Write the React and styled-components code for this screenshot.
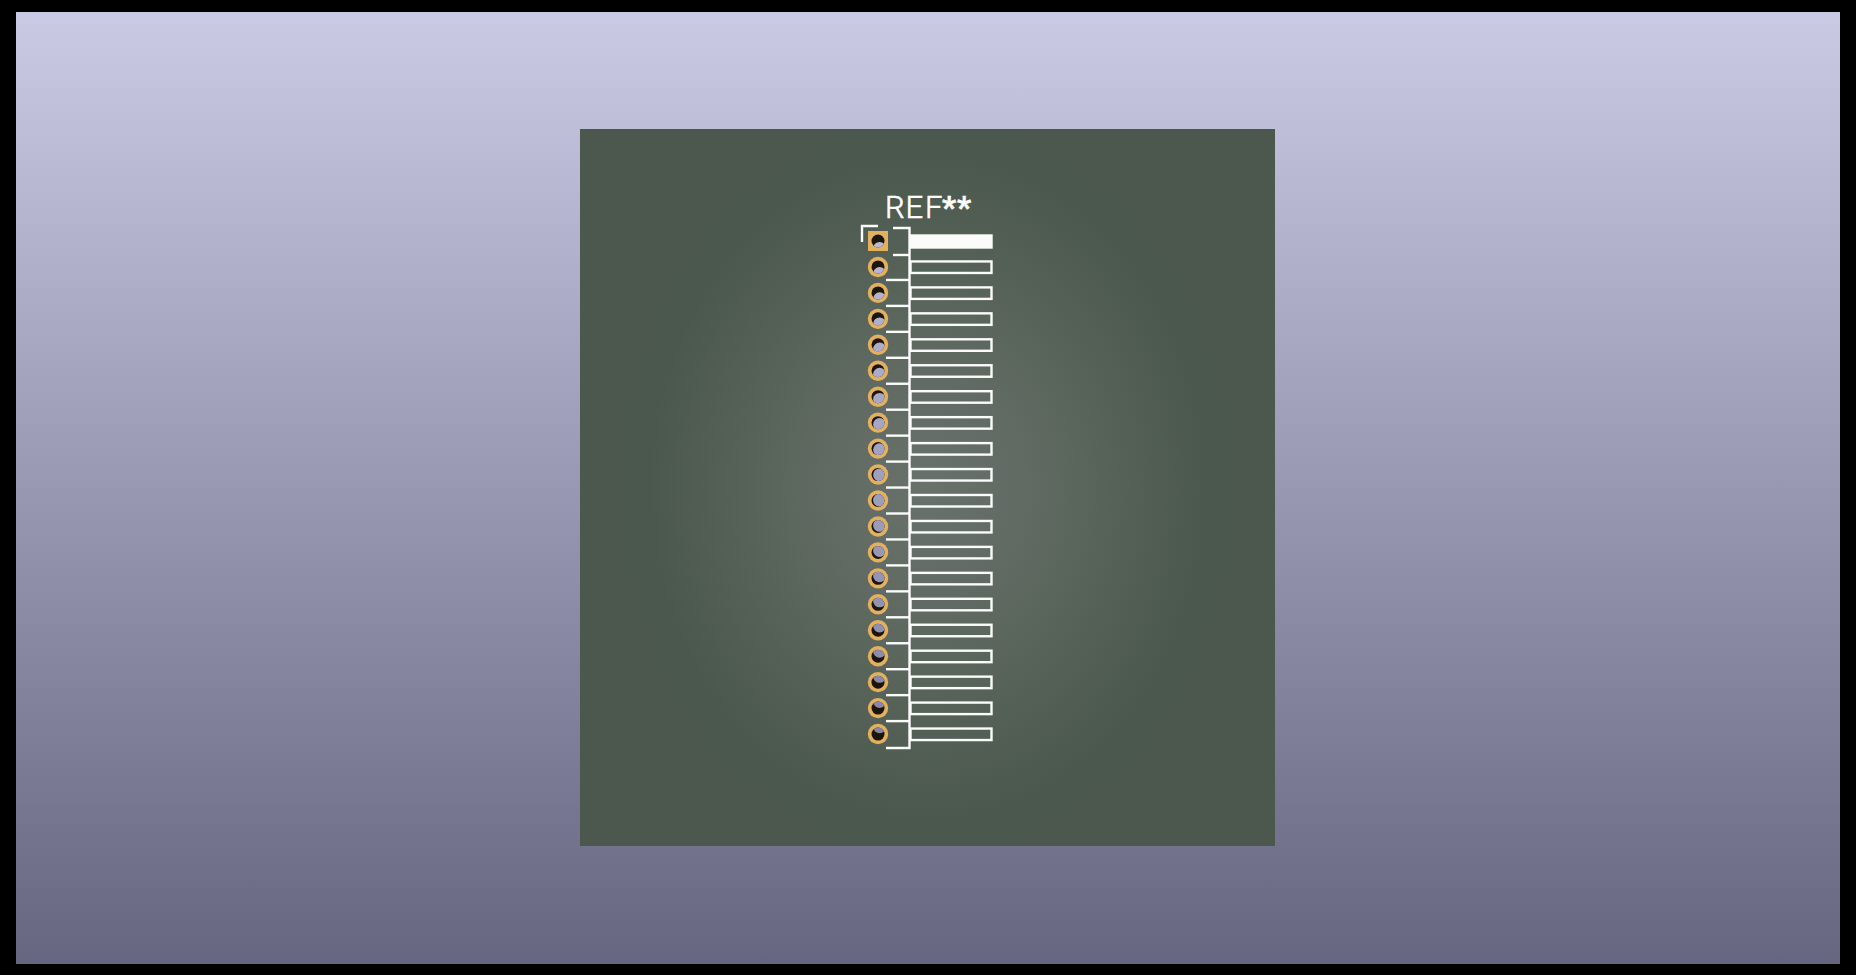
import styled, { createGlobalStyle } from "styled-components";

const GlobalStyle = createGlobalStyle`
  html, body {
    margin: 0;
    height: 100%;
    background: #000;
    overflow: hidden;
  }
`;

const Window = styled.div`
  box-sizing: border-box;
  width: 100vw;
  height: 100vh;
  padding: 12px 16px 11px;
  background: #000;
`;

const Canvas = styled.div`
  box-sizing: border-box;
  width: 100%;
  height: 100%;
  padding: 0 1px 1px 0;
  display: flex;
  align-items: center;
  justify-content: center;
  background: linear-gradient(180deg, #cacae4 0%, #666680 100%);
`;

const Board = styled.div`
  width: 695px;
  height: 717px;
  background: radial-gradient(
    ellipse 310px 370px at 50% 50%,
    #68726a 0%,
    #616b63 30%,
    #566258 60%,
    #4b584e 90%,
    #4c584e 100%
  );
`;

const Drawing = styled.svg`
  display: block;
`;

const RefText = styled.text`
  font-family: Roboto, "Liberation Sans", sans-serif;
  font-size: 31px;
  font-weight: 300;
  fill: #fff;
  stroke: #fff;
  stroke-width: 0.6px;
`;

const Stars = styled.tspan`
  font-size: 32px;
  font-weight: 500;
`;

const PIN_COUNT = 20;
const PITCH = 25.95;
const FIRST_Y = 241;
const PAD_X = 878;
const CENTER_X = 928;
const CENTER_Y = 488;
const HOLE_R = 6.5;
const SILK = "#fbfbfb";

// colour of the background seen through a drilled hole
const skyAt = (y) => {
  const t = (y - 241) / 493;
  const c = (a, b) => Math.round(a + (b - a) * t);
  return `rgb(${c(184, 132)},${c(184, 132)},${c(214, 164)})`;
};

const pins = Array.from({ length: PIN_COUNT }, (_, i) => FIRST_Y + i * PITCH);

const Pad = ({ y, index }) => {
  const dx = (CENTER_X - PAD_X) * 0.032;
  const dy = (CENTER_Y - y) * 0.03;
  const clipId = `hole-${index}`;
  return (
    <g>
      {index === 0 ? (
        <rect x={PAD_X - 10} y={y - 10} width="20" height="20" fill="#e3b05e" />
      ) : (
        <circle cx={PAD_X} cy={y} r="10.2" fill="#e3b05e" />
      )}
      <clipPath id={clipId}>
        <circle cx={PAD_X} cy={y} r={HOLE_R} />
      </clipPath>
      <circle cx={PAD_X} cy={y} r={HOLE_R} fill="#1c150c" />
      <circle
        cx={PAD_X + dx}
        cy={y + dy}
        r={HOLE_R}
        fill={skyAt(y)}
        clipPath={`url(#${clipId})`}
      />
    </g>
  );
};

const Lead = ({ y, index }) => (
  <rect
    x="910.5"
    y={y - 5.5}
    width="81"
    height={index === 0 ? 12 : 11.5}
    fill={index === 0 ? SILK : "none"}
    stroke={SILK}
    strokeWidth="2.4"
  />
);

const Silk = () => (
  <g stroke={SILK} strokeWidth="2.4" fill="none">
    <path d="M862 242V226H878" />
    <path d="M893 228H909.5V748H886" />
    <path d="M893 255H909.5" />
    {pins.slice(1, PIN_COUNT - 1).map((y) => (
      <path key={y} d={`M886 ${y + 13}H909.5`} />
    ))}
  </g>
);

export default function App() {
  return (
    <>
      <GlobalStyle />
      <Window>
        <Canvas>
          <Board>
            <Drawing width="695" height="717" viewBox="580 129 695 717">
              <RefText y="218">
                <tspan x="885 905.5 925">REF</tspan>
                <Stars x="942 957">**</Stars>
              </RefText>
              <Silk />
              {pins.map((y, i) => (
                <Lead key={y} y={y} index={i} />
              ))}
              {pins.map((y, i) => (
                <Pad key={y} y={y} index={i} />
              ))}
            </Drawing>
          </Board>
        </Canvas>
      </Window>
    </>
  );
}
